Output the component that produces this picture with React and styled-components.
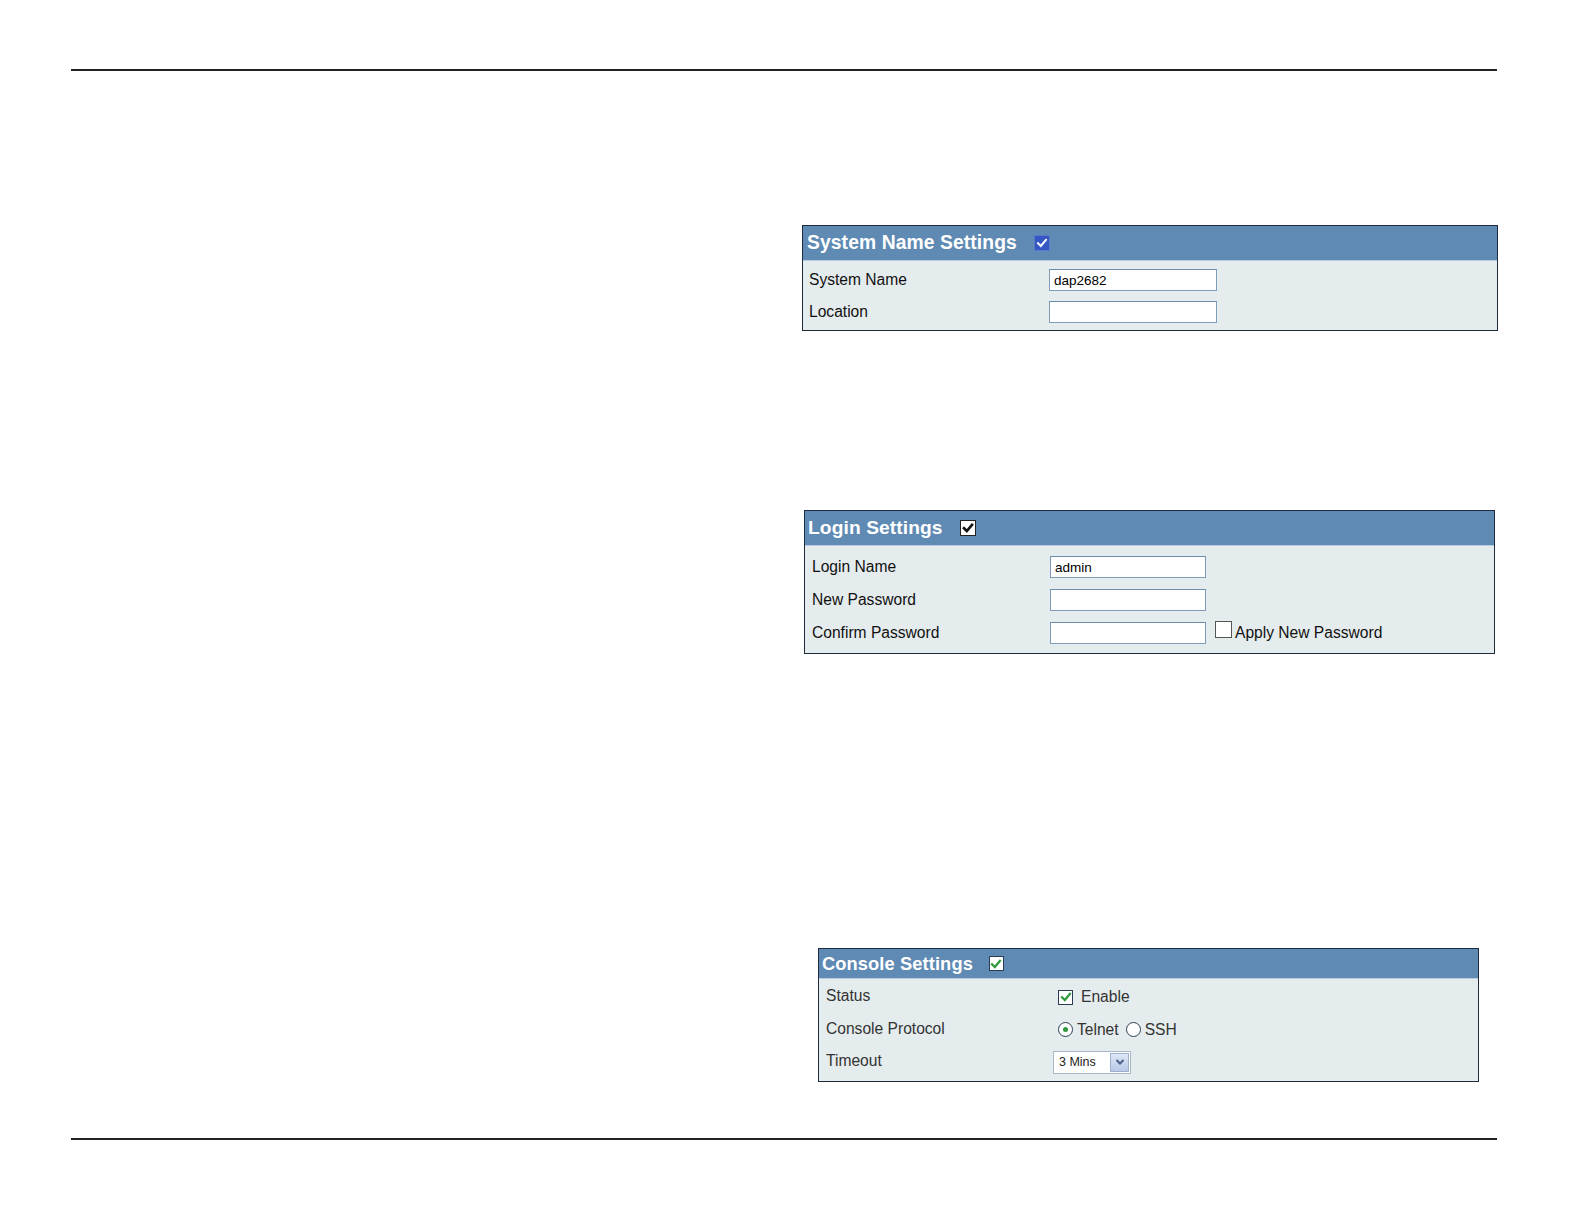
import React from 'react'
import styled, { createGlobalStyle } from 'styled-components'

const Global = createGlobalStyle`
  html, body { margin: 0; padding: 0; background: #fff; overflow: hidden; }
  body { font-family: "Liberation Sans", Arial, sans-serif; }
`

const Page = styled.div`
  width: 100%;
  padding: 69px 87px 0 71px;
  box-sizing: border-box;
  display: flex;
  flex-direction: column;
`

const Rule = styled.div`
  height: 2px;
  background: #222;
  margin-top: ${p => p.$top || 0}px;
`

const Panel = styled.div`
  margin-top: ${p => p.$top}px;
  margin-left: ${p => p.$left}px;
  width: ${p => p.$width}px;
  box-sizing: border-box;
  border: 1px solid #1d2b3d;
  background: #e5eced;
`

const Header = styled.div`
  height: ${p => p.$h}px;
  background: #5f8ab3;
  border-bottom: 1px solid #b9cbe0;
  display: flex;
  align-items: center;
  padding-left: ${p => p.$pad}px;
  gap: ${p => p.$gap}px;
`

const Title = styled.span`
  color: #fff;
  font-weight: bold;
  font-size: ${p => p.$size}px;
  letter-spacing: 0.1px;
`

const Body = styled.div`
  padding: ${p => p.$top}px 0 ${p => p.$bottom}px ${p => p.$pad}px;
  display: grid;
  grid-template-columns: ${p => p.$label}px 1fr;
  grid-auto-rows: ${p => p.$row}px;
  align-items: center;
`

const Label = styled.span`
  font-size: ${p => p.$size || 15.6}px;
  color: ${p => p.$color || '#111'};
  margin-top: ${p => p.$up ? -2 : 0}px;
`

const Field = styled.div`
  display: flex;
  align-items: center;
  gap: ${p => p.$gap || 0}px;
  padding-left: ${p => p.$shift || 0}px;
`

const Input = styled.div`
  width: ${p => p.$w}px;
  height: 22px;
  box-sizing: border-box;
  border: 1px solid #7f9db9;
  border-top-color: #6e8cac;
  background: #fff;
  font-size: 13.5px;
  color: #000;
  padding: 3px 4px 0;
`

const Box = styled.span`
  width: ${p => p.$s}px;
  height: ${p => p.$s}px;
  box-sizing: border-box;
  display: inline-flex;
  align-items: center;
  justify-content: center;
  background: ${p => p.$fill || '#fff'};
  border: 1px solid ${p => p.$border || '#333'};
`

const Opt = styled.span`
  font-size: 15.6px;
  color: ${p => p.$color || '#111'};
`

const Radio = styled.span`
  width: 15px;
  height: 15px;
  box-sizing: border-box;
  border-radius: 50%;
  border: 1px solid #2a3d55;
  background: #fff;
  display: inline-flex;
  align-items: center;
  justify-content: center;
  &::after {
    content: '';
    width: 5px;
    height: 5px;
    border-radius: 50%;
    background: ${p => p.$on ? '#2e9a3a' : 'transparent'};
  }
`

const Select = styled.div`
  width: 78px;
  height: 23px;
  box-sizing: border-box;
  border: 1px solid #a9b8c8;
  background: #fff;
  display: flex;
  align-items: center;
  justify-content: space-between;
  font-size: 12.5px;
  color: #222;
  padding-left: 5px;
`

const Drop = styled.span`
  width: 19px;
  height: 19px;
  margin-right: 1px;
  box-sizing: border-box;
  border: 1px solid #9fb0cc;
  background: linear-gradient(#dfe7f6, #b9c8e6);
  display: flex;
  align-items: center;
  justify-content: center;
`

const Check = ({ color, w = 2.4 }) => (
  <svg width="12" height="12" viewBox="0 0 12 12">
    <path d="M2 6.2 L4.8 9 L10 2.8" fill="none" stroke={color} strokeWidth={w} strokeLinecap="square" />
  </svg>
)

export default function App() {
  return (
    <>
      <Global />
      <Page>
        <Rule />

        <Panel $top={154} $left={731} $width={696}>
          <Header $h={34} $pad={4} $gap={17}>
            <Title $size={19.3}>System Name Settings</Title>
            <Box $s={16} $fill="#3557c4" $border="#5d79c9">
              <Check color="#fff" w={2} />
            </Box>
          </Header>
          <Body $pad={6} $label={240} $top={3} $bottom={2} $row={32}>
            <Label>System Name</Label>
            <Field><Input $w={168}>dap2682</Input></Field>
            <Label>Location</Label>
            <Field><Input $w={168} /></Field>
          </Body>
        </Panel>

        <Panel $top={179} $left={733} $width={691}>
          <Header $h={34} $pad={3} $gap={17}>
            <Title $size={19.2}>Login Settings</Title>
            <Box $s={16} $border="#222">
              <Check color="#111" w={2.6} />
            </Box>
          </Header>
          <Body $pad={7} $label={238} $top={4} $bottom={4} $row={33}>
            <Label>Login Name</Label>
            <Field><Input $w={156}>admin</Input></Field>
            <Label>New Password</Label>
            <Field><Input $w={156} /></Field>
            <Label>Confirm Password</Label>
            <Field $gap={9}>
              <Input $w={156} />
              <Box $s={17} $border="#555" style={{ marginTop: -6 }} />
              <Opt style={{ marginLeft: -6 }}>Apply New Password</Opt>
            </Field>
          </Body>
        </Panel>

        <Panel $top={294} $left={747} $width={661}>
          <Header $h={29} $pad={3} $gap={16}>
            <Title $size={18.3}>Console Settings</Title>
            <Box $s={15} $border="#2a3d55">
              <Check color="#2e9a3a" w={2.2} />
            </Box>
          </Header>
          <Body $pad={7} $label={227} $top={2} $bottom={2} $row={32.5}>
            <Label $color="#333" $up>Status</Label>
            <Field $shift={5} $gap={8}>
              <Box $s={15} $border="#2a3d55"><Check color="#2e9a3a" w={2.2} /></Box>
              <Opt $color="#333">Enable</Opt>
            </Field>
            <Label $color="#333" $up>Console Protocol</Label>
            <Field $shift={5} $gap={4}>
              <Radio $on />
              <Opt $color="#333">Telnet</Opt>
              <Radio style={{ marginLeft: 3 }} />
              <Opt $color="#333">SSH</Opt>
            </Field>
            <Label $color="#333" $up>Timeout</Label>
            <Field>
              <Select>
                3 Mins
                <Drop>
                  <svg width="10" height="8" viewBox="0 0 10 8">
                    <path d="M1.5 2 L5 5.5 L8.5 2" fill="none" stroke="#4b5f8a" strokeWidth="2" />
                  </svg>
                </Drop>
              </Select>
            </Field>
          </Body>
        </Panel>

        <Rule $top={56} />
      </Page>
    </>
  )
}
